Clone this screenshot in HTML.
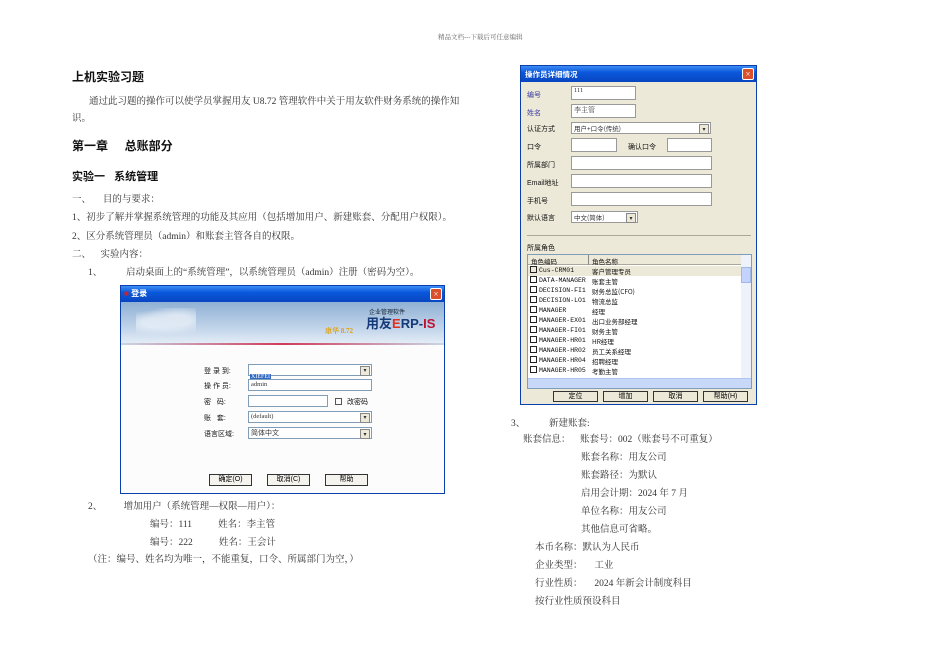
<!DOCTYPE html>
<html><head><meta charset="utf-8"><style>
*{margin:0;padding:0;box-sizing:border-box}
body{width:950px;height:672px;background:#fff;position:relative;overflow:hidden;font-family:"Liberation Serif","Noto Serif CJK SC",serif;color:#333}
.t{position:absolute;font-size:9.5px;white-space:nowrap;line-height:12px}
.h{position:absolute;font-family:"Liberation Sans","Noto Sans CJK SC",sans-serif;font-weight:bold;color:#111;white-space:nowrap}
.s{font-family:"Liberation Sans","Noto Sans CJK SC",sans-serif}
.a{position:absolute}
.inp{position:absolute;background:#fff;border:1px solid #7f9db9}
.dd{position:absolute;width:10px;height:10px;right:1px;top:1px;background:#ece9d8;border:1px solid #888;font-size:6px;text-align:center;line-height:8px}
.btn{position:absolute;background:#f4f3ee;border:1px solid #333;font-size:7px;text-align:center;font-family:"Liberation Sans","Noto Sans CJK SC",sans-serif;color:#000}
.lb{position:absolute;font-size:7px;font-family:"Liberation Sans","Noto Sans CJK SC",sans-serif;color:#111;white-space:nowrap}
.row{position:absolute;left:9px;font-size:6.5px;font-family:"Liberation Mono","Noto Sans CJK SC",monospace;color:#111;white-space:nowrap;height:10px;line-height:10px}
.row i{display:inline-block;width:7px;height:7px;border:1px solid #222;vertical-align:-1px;margin-right:2px}
.row b{position:absolute;left:62px;font-weight:normal;font-family:"Noto Sans CJK SC",sans-serif}
</style></head><body>
<div class="t" style="left:438px;top:32px;font-size:6.5px;color:#666">精品文档---下载后可任意编辑</div>

<div class="h" style="left:72px;top:68px;font-size:12px">上机实验习题</div>
<div class="t" style="left:89px;top:96px">通过此习题的操作可以使学员掌握用友 U8.72 管理软件中关于用友软件财务系统的操作知</div>
<div class="t" style="left:72px;top:113px">识。</div>
<div class="h" style="left:72px;top:137px;font-size:12px">第一章&nbsp;&nbsp;&nbsp;&nbsp;&nbsp;总账部分</div>
<div class="h" style="left:72px;top:168px;font-size:11px">实验一&nbsp;&nbsp;&nbsp;系统管理</div>
<div class="t" style="left:72px;top:194px">一、&nbsp;&nbsp;&nbsp;&nbsp;&nbsp;目的与要求：</div>
<div class="t" style="left:72px;top:212px">1、初步了解并掌握系统管理的功能及其应用（包括增加用户、新建账套、分配用户权限）。</div>
<div class="t" style="left:72px;top:231px">2、区分系统管理员（admin）和账套主管各自的权限。</div>
<div class="t" style="left:72px;top:249px">二、&nbsp;&nbsp;&nbsp;&nbsp;实验内容：</div>
<div class="t" style="left:88px;top:267px">1、&nbsp;&nbsp;&nbsp;&nbsp;&nbsp;&nbsp;&nbsp;&nbsp;&nbsp;&nbsp;启动桌面上的“系统管理”，以系统管理员（admin）注册（密码为空）。</div>

<!-- login dialog -->
<div class="a" style="left:120px;top:285px;width:325px;height:209px;background:#fcfcfd;border:1px solid #0a3fae">
 <div class="a" style="left:0;top:0;width:323px;height:16px;background:linear-gradient(#3d8cf5,#0a58dc 40%,#0845c0)"></div>
 <div class="a s" style="left:3px;top:2px;font-size:8px;color:#fff;font-weight:bold"><span style="color:#c22">■</span> 登录</div>
 <div class="a" style="left:309px;top:2px;width:12px;height:12px;background:#d9502b;border:1px solid #fff;border-radius:2px;color:#fff;font-size:9px;line-height:10px;text-align:center">×</div>
 <div class="a" style="left:0;top:16px;width:323px;height:42px;background:linear-gradient(180deg,#8fb0d4,#c8d9ec 70%,#e6eef7)"></div>
 <div class="a" style="left:15px;top:22px;width:60px;height:30px;background:radial-gradient(ellipse at 30% 50%,#e9f0f8 20%,transparent 60%),radial-gradient(ellipse at 70% 40%,#e9f0f8 20%,transparent 60%);opacity:.8"></div>
 <div class="a" style="left:0;top:57px;width:323px;height:2px;background:linear-gradient(90deg,#c9d6e6,#d23a5a 50%,#c9d6e6)"></div>
 <div class="a s" style="left:248px;top:21px;font-size:6px;color:#123">企业管理软件</div>
 <div class="a s" style="left:245px;top:27px;font-size:13px;font-weight:bold;color:#153a7a">用友<span style="color:#e03020">E</span>RP-<span style="color:#c01030">IS</span></div>
 <div class="a" style="left:204px;top:40px;font-size:7px;color:#e0a010;font-weight:bold">康华 8.72</div>
 <div class="lb" style="left:83px;top:80px">登 录 到:</div>
 <div class="inp" style="left:127px;top:78px;width:124px;height:12px"><span style="background:#316ac5;color:#fff;font-size:6px;margin:1px;padding:0 1px">XIEFEI</span><div class="dd">▾</div></div>
 <div class="lb" style="left:83px;top:95px">操 作 员:</div>
 <div class="inp" style="left:127px;top:93px;width:124px;height:12px;font-size:6.5px;padding-left:2px;line-height:10px">admin</div>
 <div class="lb" style="left:83px;top:111px">密&nbsp;&nbsp;&nbsp;码:</div>
 <div class="inp" style="left:127px;top:109px;width:80px;height:12px"></div>
 <div class="a" style="left:214px;top:112px;width:7px;height:7px;border:1px solid #555"></div>
 <div class="lb" style="left:226px;top:111px">改密码</div>
 <div class="lb" style="left:83px;top:127px">账&nbsp;&nbsp;&nbsp;套:</div>
 <div class="inp" style="left:127px;top:125px;width:124px;height:12px;font-size:6.5px;padding-left:2px;line-height:10px">(default)<div class="dd">▾</div></div>
 <div class="lb" style="left:83px;top:143px">语言区域:</div>
 <div class="inp" style="left:127px;top:141px;width:124px;height:12px;font-size:7px;padding-left:2px;line-height:10px;font-family:'Noto Sans CJK SC',sans-serif">简体中文<div class="dd">▾</div></div>
 <div class="btn" style="left:88px;top:188px;width:43px;height:12px;line-height:10px">确定(O)</div>
 <div class="btn" style="left:146px;top:188px;width:43px;height:12px;line-height:10px">取消(C)</div>
 <div class="btn" style="left:204px;top:188px;width:43px;height:12px;line-height:10px">帮助</div>
</div>

<div class="t" style="left:88px;top:501px">2、&nbsp;&nbsp;&nbsp;&nbsp;&nbsp;&nbsp;&nbsp;&nbsp;&nbsp;增加用户（系统管理—权限—用户）：</div>
<div class="t" style="left:150px;top:519px">编号：111&nbsp;&nbsp;&nbsp;&nbsp;&nbsp;&nbsp;&nbsp;&nbsp;&nbsp;&nbsp;&nbsp;姓名：李主管</div>
<div class="t" style="left:150px;top:537px">编号：222&nbsp;&nbsp;&nbsp;&nbsp;&nbsp;&nbsp;&nbsp;&nbsp;&nbsp;&nbsp;&nbsp;姓名：王会计</div>
<div class="t" style="left:88px;top:554px">（注：编号、姓名均为唯一，不能重复，口令、所属部门为空，）</div>

<!-- operator dialog -->
<div class="a" style="left:520px;top:65px;width:237px;height:340px;background:#ece9d8;border:1px solid #0a3fae">
 <div class="a" style="left:0;top:0;width:235px;height:16px;background:linear-gradient(#3d8cf5,#0a58dc 40%,#0845c0)"></div>
 <div class="a s" style="left:4px;top:3px;font-size:7.5px;color:#fff;font-weight:bold">操作员详细情况</div>
 <div class="a" style="left:221px;top:2px;width:12px;height:12px;background:#d9502b;border:1px solid #fff;border-radius:2px;color:#fff;font-size:9px;line-height:10px;text-align:center">×</div>
 <div class="lb" style="left:6px;top:24px;color:#3a3aa0">编号</div>
 <div class="inp" style="left:50px;top:20px;width:65px;height:14px;font-size:6.5px;padding-left:2px;border-color:#999">111</div>
 <div class="lb" style="left:6px;top:42px;color:#3a3aa0">姓名</div>
 <div class="inp" style="left:50px;top:38px;width:65px;height:14px;font-size:7px;padding-left:2px;border-color:#999">李主管</div>
 <div class="lb" style="left:6px;top:58px">认证方式</div>
 <div class="inp" style="left:50px;top:56px;width:140px;height:12px;font-size:6.5px;padding-left:2px;line-height:10px;border-color:#999;font-family:'Noto Sans CJK SC',sans-serif">用户+口令(传统)<div class="dd">▾</div></div>
 <div class="lb" style="left:6px;top:76px">口令</div>
 <div class="inp" style="left:50px;top:72px;width:46px;height:14px;border-color:#999"></div>
 <div class="lb" style="left:107px;top:76px">确认口令</div>
 <div class="inp" style="left:146px;top:72px;width:45px;height:14px;border-color:#999"></div>
 <div class="lb" style="left:6px;top:94px">所属部门</div>
 <div class="inp" style="left:50px;top:90px;width:141px;height:14px;border-color:#999"></div>
 <div class="lb" style="left:6px;top:112px">Email地址</div>
 <div class="inp" style="left:50px;top:108px;width:141px;height:14px;border-color:#999"></div>
 <div class="lb" style="left:6px;top:130px">手机号</div>
 <div class="inp" style="left:50px;top:126px;width:141px;height:14px;border-color:#999"></div>
 <div class="lb" style="left:6px;top:147px">默认语言</div>
 <div class="inp" style="left:50px;top:145px;width:67px;height:12px;font-size:6.5px;padding-left:2px;line-height:10px;border-color:#999;font-family:'Noto Sans CJK SC',sans-serif">中文(简体)<div class="dd">▾</div></div>
 <div class="a" style="left:6px;top:169px;width:224px;height:1px;background:#aca899"></div>
 <div class="lb" style="left:6px;top:177px">所属角色</div>
 <div class="a" style="left:6px;top:188px;width:225px;height:135px;background:#fff;border:1px solid #7f9db9">
  <div class="a" style="left:0;top:0;width:213px;height:10px;background:#ece9d8;border-bottom:1px solid #aca899"></div>
  <div class="lb" style="left:3px;top:1px;font-size:6.5px">角色编码</div>
  <div class="a" style="left:60px;top:0;width:1px;height:10px;background:#888"></div>
  <div class="lb" style="left:64px;top:1px;font-size:6.5px">角色名称</div>
  <div class="a" style="left:0;top:11px;width:213px;height:10px;background:#ece9d8"></div>
  <div class="row" style="left:2px;top:11px"><i></i>Cus-CRM01<b>客户管理专员</b></div>
  <div class="row" style="left:2px;top:21px"><i></i>DATA-MANAGER<b>账套主管</b></div>
  <div class="row" style="left:2px;top:31px"><i></i>DECISION-FI1<b>财务总监(CFO)</b></div>
  <div class="row" style="left:2px;top:41px"><i></i>DECISION-LO1<b>物流总监</b></div>
  <div class="row" style="left:2px;top:51px"><i></i>MANAGER<b>经理</b></div>
  <div class="row" style="left:2px;top:61px"><i></i>MANAGER-EX01<b>出口业务部经理</b></div>
  <div class="row" style="left:2px;top:71px"><i></i>MANAGER-FI01<b>财务主管</b></div>
  <div class="row" style="left:2px;top:81px"><i></i>MANAGER-HR01<b>HR经理</b></div>
  <div class="row" style="left:2px;top:91px"><i></i>MANAGER-HR02<b>员工关系经理</b></div>
  <div class="row" style="left:2px;top:101px"><i></i>MANAGER-HR04<b>招聘经理</b></div>
  <div class="row" style="left:2px;top:111px"><i></i>MANAGER-HR05<b>考勤主管</b></div>
  <div class="a" style="left:213px;top:0;width:10px;height:123px;background:#eef2fb"><div style="margin-top:12px;height:16px;background:#c3d3fd;border:1px solid #a0b8e8"></div></div>
  <div class="a" style="left:0;top:123px;width:223px;height:10px;background:#c8d8f8;border-top:1px solid #b0c4ee"></div>
 </div>
 <div class="btn" style="left:32px;top:325px;width:45px;height:11px;line-height:9px;background:#ece9d8">定位</div>
 <div class="btn" style="left:82px;top:325px;width:45px;height:11px;line-height:9px;background:#ece9d8">增加</div>
 <div class="btn" style="left:132px;top:325px;width:45px;height:11px;line-height:9px;background:#ece9d8">取消</div>
 <div class="btn" style="left:182px;top:325px;width:45px;height:11px;line-height:9px;background:#ece9d8">帮助(H)</div>
</div>

<div class="t" style="left:511px;top:418px">3、&nbsp;&nbsp;&nbsp;&nbsp;&nbsp;&nbsp;&nbsp;&nbsp;&nbsp;&nbsp;新建账套:</div>
<div class="t" style="left:523px;top:434px">账套信息：&nbsp;&nbsp;&nbsp;&nbsp;账套号：002（账套号不可重复）</div>
<div class="t" style="left:581px;top:452px">账套名称：用友公司</div>
<div class="t" style="left:581px;top:470px">账套路径：为默认</div>
<div class="t" style="left:581px;top:488px">启用会计期：2024 年 7 月</div>
<div class="t" style="left:581px;top:506px">单位名称：用友公司</div>
<div class="t" style="left:581px;top:524px">其他信息可省略。</div>
<div class="t" style="left:535px;top:542px">本币名称：默认为人民币</div>
<div class="t" style="left:535px;top:560px">企业类型：&nbsp;&nbsp;&nbsp;&nbsp;&nbsp;工业</div>
<div class="t" style="left:535px;top:578px">行业性质：&nbsp;&nbsp;&nbsp;&nbsp;&nbsp;2024 年新会计制度科目</div>
<div class="t" style="left:535px;top:596px">按行业性质预设科目</div>
</body></html>
